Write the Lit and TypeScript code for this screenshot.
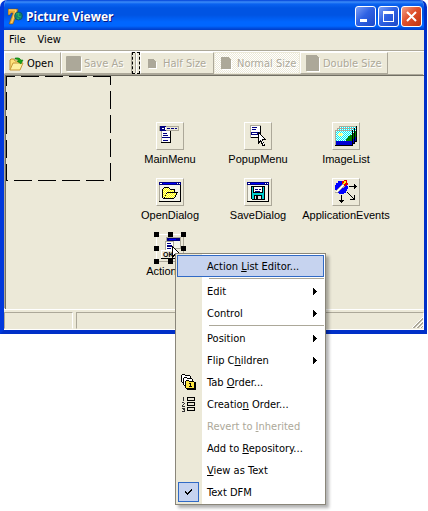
import { LitElement, html, css, svg, nothing, TemplateResult } from "lit";
import { customElement, property } from "lit/decorators.js";

const cursor = (x: number, y: number) => svg`<g transform="translate(${x} ${y})">
  <path d="M0 0H1V1H2V2H3V3H4V4H5V5H6V6H7V7H8V8H5V10H6V12H7V14H4V12H3V10H2V11H1V12H0Z" fill="#000"/>
  <path d="M1 2H2V3H3V4H4V5H5V6H6V7H4V9H5V11H6V13H5V11H4V9H3V8H2V9H1Z" fill="#fff"/></g>`;

const dialogFrame = svg`
  <rect x="3" y="4" width="22" height="20" fill="#aca899"/>
  <rect x="4" y="5" width="20" height="18" fill="#f4f4ea"/>
  <path d="M3 4H25V7H3Z" fill="#000080"/>
  <path d="M7 5H20V6H7Z" fill="#0000ff"/>
  <path d="M4 5H6V6H4ZM21 5H22V6H21ZM23 5H24V6H23Z" fill="#fff"/>
  <path d="M24 7H25V24H3V23H24Z" fill="#000"/>`;

const art: Record<string, TemplateResult> = {
  MainMenu: svg`
    <path d="M3 4H23V9H3Z" fill="#aca899"/><path d="M4 5H22V8H4Z" fill="#ece9d8"/>
    <path d="M4 4H10V9H4Z" fill="#000080"/><path d="M6 6H8V7H6ZM9 5H10V8H9Z" fill="#fff"/>
    <path d="M11 6H14V7H11ZM15 6H18V7H15ZM19 6H21V7H19Z" fill="#000080"/>
    <path d="M5 9H15V21H5Z" fill="#000"/><path d="M5 9H14V20H5Z" fill="#aca899"/><path d="M6 9H14V20H6Z" fill="#fff"/>
    <path d="M7 11H11V12H7ZM7 13H12V14H7ZM6 15H14V16H6ZM7 18H12V19H7Z" fill="#000080"/>`,
  PopupMenu: svg`
    <path d="M6 3H17V16H6Z" fill="#aca899"/><path d="M7 4H16V15H7Z" fill="#fff"/><path d="M16 4H17V16H7V15H16Z" fill="#000"/>
    <path d="M8 5H13V6H8ZM8 7H12V8H8ZM7 10H16V13H7Z" fill="#000080"/><path d="M8 11H13V12H8Z" fill="#fff"/>
    ${cursor(14, 10)}`,
  ImageList: svg`
    ${[[7, 4], [5, 6], [3, 8]].map(([x, y]) => svg`<g transform="translate(${x} ${y})">
      <path d="M0 0H18V16H0Z" fill="#000"/><path d="M0 0H17V15H0Z" fill="#aca899"/>
      <path d="M1 1H17V15H1Z" fill="#fff"/><path d="M1 1H17V12H1Z" fill="url(#cyan)"/>
      <path d="M17 5H15V6H13V8H12V9H11V11H17Z" fill="#008000"/><path d="M1 11H17V15H1Z" fill="#0000d0"/></g>`)}
    <path d="M7 11H10V14H7ZM6 12H11V13H6Z" fill="#ffff80"/>`,
  OpenDialog: svg`${dialogFrame}
    <path d="M6 11H7V10H8V9H13V10H14V11H19V14H22V15H21V17H20V19H19V20H18V21H7V20H6Z" fill="#000"/>
    <path d="M7 11H8V10H13V11H14V12H18V14H11V15H10V17H9V19H8V20H7Z" fill="url(#yellow)"/>
    <path d="M11 15H20V17H19V19H18V20H9V18H10V16H11Z" fill="url(#yellow)"/>`,
  SaveDialog: svg`${dialogFrame}
    <path d="M7 8H21V22H8V21H7Z" fill="#000"/><path d="M8 9H20V21H8Z" fill="#00d0d0"/>
    <path d="M9 9H19V15H9Z" fill="#000"/><path d="M10 9H18V14H10Z" fill="#fff"/>
    <path d="M11 11H14V12H11ZM15 11H17V12H15ZM11 13H16V14H11Z" fill="#000080"/>
    <path d="M10 17H18V22H10Z" fill="#000"/><path d="M11 18H17V21H11Z" fill="#e0e0e0"/><path d="M12 18H14V21H12Z" fill="#000"/>`,
  ApplicationEvents: svg`
    <path d="M6 3H12V4H14V6H15V8H16V11H15V13H14V15H12V16H7V15H5V14H4V12H3V7H4V5H6Z" fill="#0000ff"/>
    <path d="M3 14H4V12H5V11H6V10H7V9H8V8H9V7H10V6H12V7H13V9H12V10H10V11H9V12H8V13H7V14H6V15H3Z" fill="#aca899"/>
    <path d="M4 13H5V12H6V11H7V10H8V9H9V8H10V7H12V8H11V9H10V10H9V11H8V12H7V13H6V14H4Z" fill="#fff"/>
    <path d="M10 3H12V2H15V5H16V7H14V8H12V6H10Z" fill="#e00000"/><path d="M12 3H14V5H13V6H11V5H12Z" fill="#ffff00"/>
    <path d="M17 8H25V9H17ZM22 6H23V11H22ZM23 7H24V10H23Z" fill="#000"/>
    <path d="M9 17H10V25H9ZM7 22H12V23H7ZM8 23H11V24H8Z" fill="#000"/>
    <path d="M15 14H16V15H17V16H18V17H19V18H20V19H21V20H22V17H23V22H18V21H21V20H20V19H19V18H18V17H17V16H16V15H15Z" fill="#000"/>`,
  ActionList: svg`
    <path d="M10 3H25V15H10Z" fill="#aca899"/><path d="M11 4H24V7H11Z" fill="#000080"/><path d="M13 5H20V6H13Z" fill="#0000ff"/>
    <path d="M12 7H24V14H12Z" fill="#f4f4ea"/><path d="M9 7H18V16H9Z" fill="#aca899"/><path d="M10 8H17V16H10Z" fill="#fff"/>
    <path d="M11 9H15V10H11ZM11 11H16V13H11ZM11 14H15V15H11Z" fill="#000080"/>
    <path d="M5 16H20V25H5Z" fill="#000"/><path d="M5 16H19V24H5Z" fill="#fff"/><path d="M6 17H19V24H6Z" fill="#ece9d8"/>
    <text x="7" y="23" font-size="7" font-weight="700" font-family="Liberation Sans, sans-serif">OK</text>
    ${cursor(16, 12)}`,
};

/* A non-visual component on the form: a raised tile with its name below. */
@customElement("form-component")
class FormComponent extends LitElement {
  @property() name = "";
  @property({ type: Boolean }) selected = false;
  static styles = css`
    :host { display: flex; flex-direction: column; align-items: center; height: 56px; font: 11px/14px "Liberation Sans", Arial, sans-serif; }
    .tile { position: relative; width: 28px; height: 28px; box-sizing: border-box; background: #ece9d8; border: 1px solid; border-color: #fff #aca899 #aca899 #fff; }
    .art { display: block; margin: -1px; }
    .handles { position: absolute; inset: -3px; display: grid; grid-template-columns: repeat(3, 5px); justify-content: space-between; align-content: space-between; }
    .handle { width: 5px; height: 5px; background: #000; }
    .blank { background: none; }
    .name { margin-top: 2px; white-space: nowrap; }
  `;
  render() {
    return html`<div class="tile">
        <svg class="art" width="28" height="28" viewBox="0 0 28 28" shape-rendering="crispEdges" aria-hidden="true">
          <defs>
            <pattern id="yellow" width="2" height="2" patternUnits="userSpaceOnUse"><path d="M0 0H2V2H0Z" fill="#ffff00"/><path d="M0 0H1V1H0ZM1 1H2V2H1Z" fill="#fffbb0"/></pattern>
            <pattern id="cyan" width="2" height="2" patternUnits="userSpaceOnUse"><path d="M0 0H2V2H0Z" fill="#00f0f8"/><path d="M0 0H1V1H0ZM1 1H2V2H1Z" fill="#e8ffff"/></pattern>
          </defs>
          ${art[this.name]}
        </svg>
        ${this.selected
          ? html`<div class="handles">${[0, 1, 2, 3, 4, 5, 6, 7, 8].map((i) => html`<i class="handle ${i === 4 ? "blank" : ""}"></i>`)}</div>`
          : nothing}
      </div>
      <span class="name">${this.name}</span>`;
  }
}

type Entry = { label: TemplateResult | string; sub?: boolean; hot?: boolean; off?: boolean; checked?: boolean; icon?: TemplateResult } | null;

const folder = (x: number, y: number, fill: string) => svg`<g transform="translate(${x} ${y})">
  <path d="M0 1H1V0H4V1H9V2H10V9H1V8H0Z" fill="#000"/><path d="M1 1H4V2H9V8H1Z" fill="${fill}"/></g>`;

const tabOrderIcon = html`<svg width="16" height="16" viewBox="0 0 16 16" shape-rendering="crispEdges" aria-hidden="true">
  ${folder(0, 0, "#fff")}${folder(2, 3, "#fff")}${folder(4, 6, "#ffe640")}
  <path d="M9 9H10V12H11V13H8V12H9V10H8V9Z" fill="#000"/><path d="M14 8H15V16H6V15H14Z" fill="#000"/></svg>`;

const creationIcon = html`<svg width="16" height="16" viewBox="0 0 16 16" shape-rendering="crispEdges" aria-hidden="true">
  <path d="M2 1H3V5H2ZM1 6H3V7H4V8H3V9H2V10H4V11H1V9H2V8H3V7H1ZM1 12H4V16H1V15H3V14H2V13H1Z" fill="#333"/>
  <g fill="#000"><path d="M6 1H14V5H6ZM6 6H14V10H6ZM6 11H14V15H6Z"/></g>
  <path d="M7 2H13V4H7ZM7 7H13V9H7ZM7 12H13V14H7Z" fill="#e8e4d4"/></svg>`;

const checkIcon = html`<svg width="7" height="7" viewBox="0 0 7 7" shape-rendering="crispEdges" aria-hidden="true">
  <path d="M0 2H1V3H2V4H3V3H4V2H5V1H6V0H7V2H6V3H5V4H4V5H3V6H2V5H1V4H0Z" fill="#000"/></svg>`;

const entries: Entry[] = [
  { label: html`Action <u>L</u>ist Editor...`, hot: true },
  null,
  { label: "Edit", sub: true },
  { label: "Control", sub: true },
  null,
  { label: "Position", sub: true },
  { label: html`Flip C<u>h</u>ildren`, sub: true },
  { label: html`Tab <u>O</u>rder...`, icon: tabOrderIcon },
  { label: html`Creatio<u>n</u> Order...`, icon: creationIcon },
  { label: html`Revert to <u>I</u>nherited`, off: true },
  { label: html`Add to <u>R</u>epository...` },
  { label: html`<u>V</u>iew as Text` },
  { label: "Text DFM", checked: true, icon: checkIcon },
];

@customElement("context-menu")
class ContextMenu extends LitElement {
  static styles = css`
    :host { display: block; box-sizing: border-box; width: 151px; padding: 1px; border: 1px solid #8a867a; background: linear-gradient(90deg, #ece9d8 26px, #fff 26px); box-shadow: 3px 3px 3px rgba(0, 0, 0, 0.3); }
    .item { display: grid; grid-template-columns: 25px 1fr 11px; align-items: center; width: 100%; height: 22px; box-sizing: border-box; margin: 0; padding: 0; border: 0; background: none; color: #000; font: 11px/14px Tahoma, "DejaVu Sans Condensed", sans-serif; text-align: left; white-space: nowrap; }
    .item:disabled { color: #aca899; }
    .hot { background: #c6d3ef; box-shadow: inset 0 0 0 1px #316ac5; }
    .label { padding: 2px 0 0 5px; }
    .icon { display: flex; align-items: center; justify-content: center; height: 20px; width: 21px; box-sizing: border-box; margin-left: 1px; }
    .checked { background: #c6d3ef; border: 1px solid #316ac5; }
    .arrow { display: block; }
    .rule { height: 1px; margin: 1px 0 1px 32px; border: 0; background: #aca899; }
    u { text-underline-offset: 1px; }
  `;
  render() {
    return html`<div role="menu" aria-label="Component">${entries.map((e) =>
      e === null
        ? html`<hr class="rule" />`
        : html`<button class="item ${e.hot ? "hot" : ""}" role=${e.checked ? "menuitemcheckbox" : "menuitem"} aria-checked=${e.checked ? "true" : nothing} ?disabled=${e.off}>
            <span class="icon ${e.checked ? "checked" : ""}">${e.icon ?? nothing}</span>
            <span class="label">${e.label}</span>
            ${e.sub ? html`<svg class="arrow" width="4" height="7" viewBox="0 0 4 7" shape-rendering="crispEdges" aria-hidden="true"><path d="M0 0H1V1H2V2H3V3H4V4H3V5H2V6H1V7H0Z"/></svg>` : nothing}
          </button>`)}</div>`;
  }
}

const page = (w: number, h: number) => html`<svg width=${w + 1} height=${h + 1} aria-hidden="true" shape-rendering="crispEdges">
  <path transform="translate(1 1)" d="M0 0H${w - 3}L${w} 3V${h}H0Z" fill="#fff"/><path d="M0 0H${w - 3}L${w} 3V${h}H0Z" fill="#aca899"/></svg>`;

@customElement("app-root")
class AppRoot extends LitElement {
  static styles = css`
    :host { display: block; position: relative; min-height: 100vh; background: #fff; color: #000; font: 11px/14px Tahoma, "DejaVu Sans Condensed", sans-serif; }
    button { font: inherit; color: inherit; margin: 0; }
    .window { margin-right: 1px; box-sizing: border-box; border: solid; border-width: 0 3px 4px 4px; border-color: #0046e0 #0030c8 #0030c8 #0038dc; border-radius: 7px 7px 0 0; background: #ece9d8; overflow: hidden; }
    .title { display: flex; align-items: center; height: 30px; box-sizing: border-box; margin: 0 -3px 0 -4px; padding: 3px 5px 0 8px; background: linear-gradient(180deg, #0040d8 0, #3c8cf8 2px, #0a62f0 4px, #0054e3 8px, #0054e3 15px, #0066ff 22px, #0066ff 26px, #004fe0 28px, #003cc8 30px); color: #fff; }
    .caption { flex: 1; margin: 0 0 0 3px; font: bold 12px/18px "Trebuchet MS", "Open Sans", sans-serif; text-shadow: 1px 1px 0 #0a1883; }
    .controls { display: flex; gap: 2px; }
    .control { display: grid; place-items: center; width: 21px; height: 21px; padding: 0; border: 1px solid #fff; border-radius: 3px; background: linear-gradient(135deg, #7c9ff5, #2f62e4 45%, #1c48c8); }
    .close { background: linear-gradient(135deg, #f0a088, #e0502c 45%, #c03410); }
    .menubar { display: flex; height: 20px; align-items: center; padding-left: 5px; gap: 12px; border-bottom: 1px solid #aca899; }
    .menu { padding: 0; border: 0; background: none; }
    .toolbar { display: grid; grid-template-columns: 57px 71px 8px 74px 86px 88px; height: 22px; border-top: 1px solid #fff; }
    .tool { display: flex; align-items: center; gap: 2px; height: 22px; box-sizing: border-box; padding: 1px 0 0 3px; border: 1px solid; border-color: #fff #aca899 #aca899 #fff; background: none; white-space: nowrap; }
    .tool:disabled { color: #aca899; text-shadow: 1px 1px 0 #fff; }
    .glyph { display: grid; place-items: center; width: 17px; }
    .down { border-color: #ece9d8; background: repeating-conic-gradient(#fff 0 25%, #ece9d8 0 50%) 0 0 / 2px 2px; }
    .split { border: 1px dashed #000; display: flex; justify-content: center; }
    .split::before { content: ""; width: 1px; background: #aca899; border-right: 1px solid #fff; }
    .form { display: flex; align-items: flex-start; gap: 15px; height: 233px; margin: 1px 0 0 1px; border: solid #716f64; border-width: 1px 0 0 1px; box-shadow: -1px -1px 0 #aca899; }
    .image { display: block; flex: none; }
    .components { display: grid; grid-template-columns: repeat(3, 88px); padding-top: 46px; }
    .status { display: grid; grid-template-columns: 69px 1fr; gap: 3px; height: 17px; padding-top: 2px; border: solid #fff; border-width: 1px 0; }
    .panel { border: 1px solid; border-color: #aca899 #fff #ece9d8 #aca899; box-sizing: border-box; }
    .grip { display: flex; justify-content: flex-end; align-items: flex-end; }
    .popup { position: absolute; left: 175px; top: 253px; }
  `;
  render() {
    return html`<main class="window">
        <header class="title">
          <svg width="15" height="17" viewBox="0 0 15 17" aria-hidden="true">
            <path d="M0 1H10L9 5L5 16H1L5 5H3L2 7H0Z" fill="#e8a838" stroke="#6a4a10" stroke-width="0.500"/><path d="M1 2H8L3.500 15" fill="none" stroke="#ffd870"/>
            <circle cx="10.500" cy="8" r="4" fill="#108070" stroke="#064058" stroke-width="0.500"/><path d="M8 6L11 5.500L10 8L13 9M9 10L11 11" fill="none" stroke="#30b860"/>
          </svg>
          <h1 class="caption">Picture Viewer</h1>
          <div class="controls">
            <button class="control" aria-label="Minimize"><svg width="13" height="13"><path d="M1 9H8V12H1Z" fill="#fff"/></svg></button>
            <button class="control" aria-label="Maximize"><svg width="13" height="13"><path d="M1 1H12V12H1ZM2 4V11H11V4Z" fill="#fff" fill-rule="evenodd"/></svg></button>
            <button class="control close" aria-label="Close"><svg width="13" height="13"><path d="M2 2L11 11M11 2L2 11" stroke="#fff" stroke-width="2"/></svg></button>
          </div>
        </header>
        <nav class="menubar"><button class="menu">File</button><button class="menu">View</button></nav>
        <div class="toolbar" role="toolbar">
          <button class="tool">
            <span class="glyph"><svg width="15" height="14" viewBox="0 0 15 14" aria-hidden="true">
              <path d="M1 13V3L2 2H5L6 4H10V7" fill="#ffe27a" stroke="#c09030"/><path d="M1 13L4 6H14L11 13Z" fill="#fff0a0" stroke="#c89838"/>
              <path d="M6 1Q11 0 12 3H14L12 7L8 4H10Q9 2 6 2Z" fill="#18a018" stroke="#087008" stroke-width="0.500"/></svg></span>Open</button>
          <button class="tool" disabled>
            <span class="glyph"><svg width="16" height="16" aria-hidden="true"><rect x="1" y="1" width="15" height="15" rx="1" fill="#fff"/><rect width="15" height="15" rx="1" fill="#aca899"/></svg></span>Save As</button>
          <i class="split"></i>
          <button class="tool" disabled><span class="glyph">${page(8, 9)}</span>Half Size</button>
          <button class="tool down" disabled><span class="glyph">${page(10, 12)}</span>Normal Size</button>
          <button class="tool" disabled><span class="glyph">${page(13, 16)}</span>Double Size</button>
        </div>
        <section class="form">
          <svg class="image" width="105" height="105" shape-rendering="crispEdges" role="img" aria-label="Image">
            <g fill="none" stroke="#000" stroke-dasharray="18 6">
              <path d="M0 0.500H105" stroke-dashoffset="9"/><path d="M104.500 0V105" stroke-dashoffset="9"/>
              <path d="M0 104.500H105" stroke-dashoffset="16"/><path d="M0.500 0V105" stroke-dashoffset="8"/></g>
          </svg>
          <div class="components">
            <form-component name="MainMenu"></form-component>
            <form-component name="PopupMenu"></form-component>
            <form-component name="ImageList"></form-component>
            <form-component name="OpenDialog"></form-component>
            <form-component name="SaveDialog"></form-component>
            <form-component name="ApplicationEvents"></form-component>
            <form-component name="ActionList" selected></form-component>
          </div>
        </section>
        <footer class="status">
          <div class="panel"></div>
          <div class="panel grip"><svg width="12" height="12" aria-hidden="true">
            <path d="M1 12L12 1M5 12L12 5M9 12L12 9" stroke="#fff"/><path d="M2 12L12 2M3 12L12 3M6 12L12 6M7 12L12 7M10 12L12 10" stroke="#aca899"/></svg></div>
        </footer>
      </main>
      <context-menu class="popup"></context-menu>`;
  }
}
